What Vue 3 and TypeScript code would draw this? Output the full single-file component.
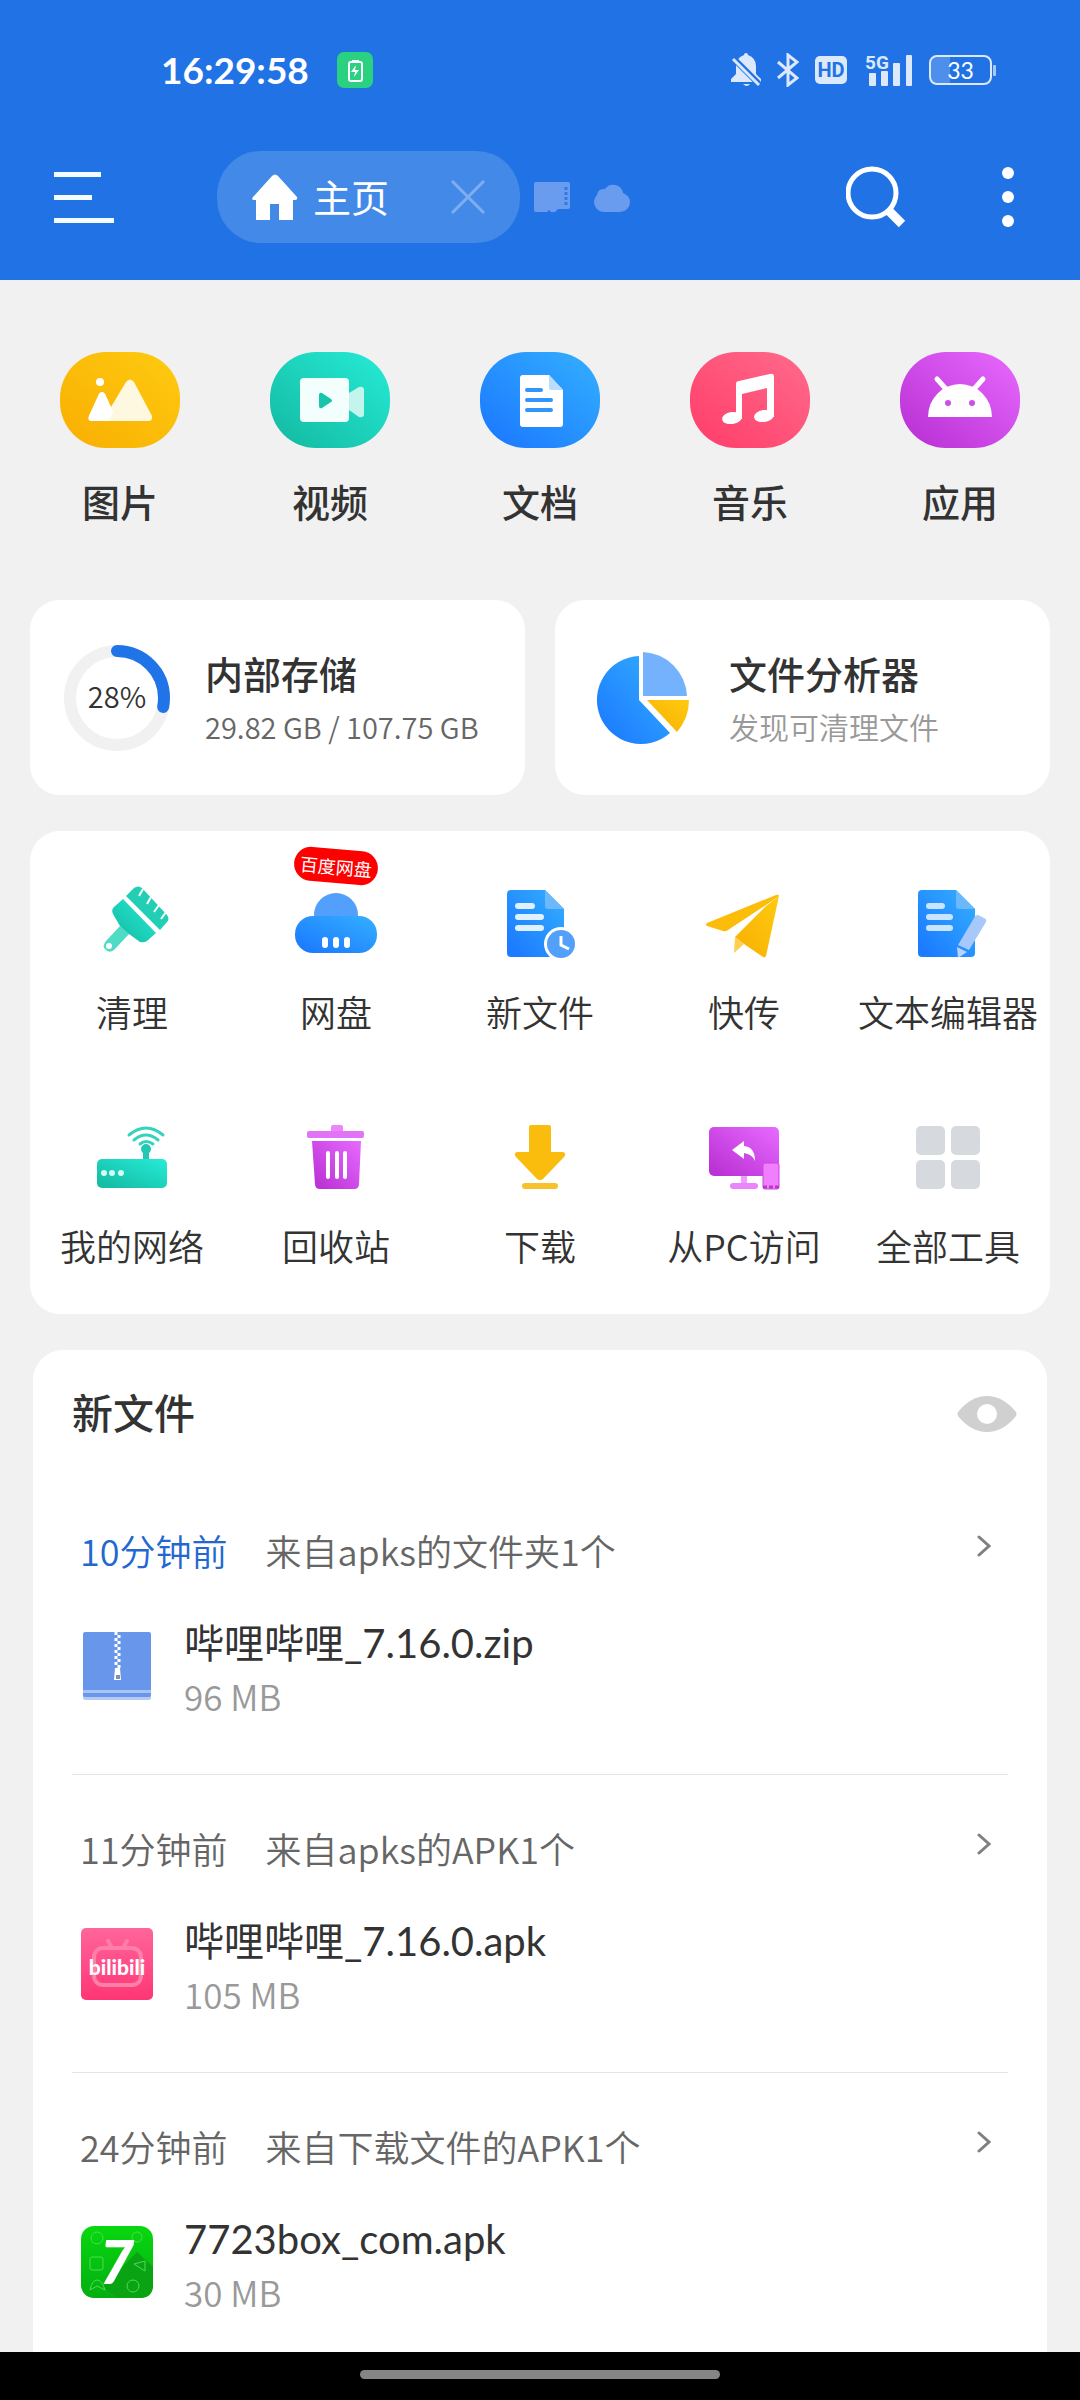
<script setup lang="ts">
interface Entry {
  label: string
  art: string
  badge?: string
}

interface FileGroup {
  time: string
  source: string
  name: string
  size: string
  art: string
  fresh?: boolean
}

const categories: Entry[] = [
  {
    label: '图片',
    art: `<rect width="120" height="96" rx="46" fill="url(#g-yellow)"/>
      <circle cx="40" cy="30" r="4" fill="#fff"/>
      <path d="M29 64 39 42q3-4 6 0l6 13 15-25q4-5 8 0l18 34q1 5-4 5H32q-5 0-3-5z" fill="#fff8e0"/>
      <path d="M29 64 39 42q3-4 6 0l8 18-4 9H32q-5 0-3-5z" fill="#fff"/>`,
  },
  {
    label: '视频',
    art: `<rect width="120" height="96" rx="46" fill="url(#g-green)"/>
      <path d="M79 41l10-6q5-1 5 3v24q0 4-5 3l-10-7z" fill="#c3f5ec"/>
      <rect x="30" y="26" width="49" height="44" rx="4" fill="#f2fffd"/>
      <path d="M49 43q0-3 3-2l9 6q2 2 0 3l-9 6q-3 1-3-2z" fill="#19c4ad"/>`,
  },
  {
    label: '文档',
    art: `<rect width="120" height="96" rx="46" fill="url(#g-blue)"/>
      <path d="M43 23h26l14 15v34q0 3-3 3H43q-3 0-3-3V26q0-3 3-3z" fill="#fff"/>
      <path d="M69 23l14 15H71q-2 0-2-2z" fill="#bcdcff"/>
      <path d="M47 38h14M47 48h24M47 58h24" stroke="#3296f8" stroke-width="4" stroke-linecap="round"/>`,
  },
  {
    label: '音乐',
    art: `<rect width="120" height="96" rx="46" fill="url(#g-red)"/>
      <path d="M46 32q0-3 3-3l31-7q4-1 4 3v40h-7V36l-25 6v25h-6z" fill="#fff"/>
      <ellipse cx="42" cy="66" rx="10" ry="6" transform="rotate(-8 42 66)" fill="#fff"/>
      <ellipse cx="74" cy="64" rx="10" ry="6" transform="rotate(-8 74 64)" fill="#fff"/>`,
  },
  {
    label: '应用',
    art: `<rect width="120" height="96" rx="46" fill="url(#g-purple)"/>
      <path d="M28 65a32 33 0 0 1 64 0z" fill="#fff"/>
      <path d="M37 27l9 10M83 27l-9 10" stroke="#fff" stroke-width="5" stroke-linecap="round"/>
      <circle cx="48" cy="51" r="3" fill="#cd4fe6"/><circle cx="72" cy="51" r="3" fill="#cd4fe6"/>`,
  },
]

const tools: Entry[] = [
  {
    label: '清理',
    art: `<path d="M36 51 22 66q-4 5-1 8 4 5 9 1l16-17z" fill="#4fdcc4"/>
      <path d="M39 24 72 58l-9 8q-3 2-7 1l-11-8-9-8-7-12q-2-4 1-7z" fill="url(#g-green)"/>
      <path d="M42 21l8-8q4-3 8 0l25 27q3 4 0 7l-7 8z" fill="#22cfb4"/>
      <path d="M59 14l-4 7M67 22l-4 7M75 30l-5 7M82 37l-5 7" stroke="#fff" stroke-width="2"/>
      <circle cx="25" cy="71" r="3" fill="#fff"/>`,
  },
  {
    label: '网盘',
    badge: '百度网盘',
    art: `<circle cx="48" cy="40" r="22" fill="#52a0fc"/>
      <rect x="7" y="41" width="82" height="37" rx="18" fill="url(#g-blue)"/>
      <path d="M37 65v5M48 65v5M59 65v5" stroke="#fff" stroke-width="6" stroke-linecap="round"/>`,
  },
  {
    label: '新文件',
    art: `<path d="M19 15h34l19 19v44q0 4-4 4H19q-4 0-4-4V19q0-4 4-4z" fill="url(#g-blue)"/>
      <path d="M53 15l19 19H56q-3 0-3-3z" fill="#6cb8fd"/>
      <path d="M26 31h14M26 42h23M26 53h23" stroke="#dff0ff" stroke-width="6" stroke-linecap="round"/>
      <circle cx="69" cy="69" r="17" fill="#fff"/><circle cx="69" cy="69" r="14" fill="#52a0f9"/>
      <path d="M69 61v9l8 4" fill="none" stroke="#fff" stroke-width="3"/>`,
  },
  {
    label: '快传',
    art: `<path d="M11 48 80 20q3-1 3 1l-13 9-38 25q-2 2-5 1l-16-5q-2-1 0-3z" fill="#fcbd0a"/>
      <path d="M83 21 70 81q-1 2-3 1L48 69l-9-7 31-31z" fill="url(#g-yellow)"/>
      <path d="M39 62l9 7-10 9z" fill="#fdd051"/>`,
  },
  {
    label: '文本编辑器',
    art: `<path d="M22 15h34l19 19v44q0 4-4 4H22q-4 0-4-4V19q0-4 4-4z" fill="url(#g-blue)"/>
      <path d="M56 15l19 19H59q-3 0-3-3z" fill="#6cb8fd"/>
      <path d="M29 31h13M29 42h21M29 53h21" stroke="#c9e4ff" stroke-width="6" stroke-linecap="round"/>
      <path d="M74 43q1-3 4-3l6 3q3 1 2 4L69 75l-11-5z" fill="#a6c8fb"/>
      <path d="M57 72l10 5-9 6z" fill="#b8d4fc"/>`,
  },
  {
    label: '我的网络',
    art: `<path d="M62 41v12" stroke="#22c8b2" stroke-width="6"/>
      <rect x="13" y="50" width="70" height="29" rx="5" fill="url(#g-green)"/>
      <circle cx="62" cy="40" r="5" fill="#22c8b2"/>
      <g fill="#d4fbf4"><circle cx="20" cy="64" r="3"/><circle cx="28" cy="64" r="3"/><circle cx="37" cy="64" r="3"/></g>
      <g fill="none" stroke="#35d3bf" stroke-width="3" stroke-linecap="round">
      <path d="M45 26q17-14 34 0M50 31q12-10 24 0M56 35q6-5 13 0"/></g>`,
  },
  {
    label: '回收站',
    art: `<path d="M43 23v-5q0-2 2-2h8q2 0 2 2v5z" fill="#ea85fb"/>
      <rect x="19" y="22" width="57" height="7" rx="2" fill="#e272f6"/>
      <path d="M24 32h49l-2 43q0 5-5 5H32q-5 0-5-5z" fill="url(#g-purple)"/>
      <path d="M40 44v24M49 44v24M57 44v24" stroke="#fff" stroke-width="4" stroke-linecap="round"/>`,
  },
  {
    label: '下载',
    art: `<path d="M39 16h18q2 0 2 2v25h12q4 1 1 5L51 70q-3 2-6 0L24 48q-3-4 1-5h12V18q0-2 2-2z" fill="#fbbd0d"/>
      <rect x="30" y="74" width="36" height="6" rx="3" fill="#f7c22a"/>`,
  },
  {
    label: '从PC访问',
    art: `<rect x="45" y="66" width="6" height="10" fill="#f09cff"/>
      <rect x="34" y="74" width="28" height="6" rx="3" fill="#ea85fb"/>
      <rect x="13" y="18" width="70" height="49" rx="5" fill="url(#g-purple)"/>
      <path d="M36 41l12-9v5q11 1 11 15-3-7-11-8v6z" fill="#fff"/>
      <rect x="67" y="54" width="16" height="26" rx="2" fill="#f07eff" stroke="#cc45e0"/>
      <path d="M67 78h16" stroke="#b53ac8" stroke-width="3" stroke-dasharray="4 2"/>`,
  },
  {
    label: '全部工具',
    art: `<g fill="#d6dade"><rect x="16" y="17" width="29" height="29" rx="5"/><rect x="51" y="17" width="29" height="29" rx="5"/>
      <rect x="16" y="51" width="29" height="29" rx="5"/><rect x="51" y="51" width="29" height="29" rx="5"/></g>`,
  },
]

const groups: FileGroup[] = [
  {
    time: '10分钟前',
    source: '来自apks的文件夹1个',
    name: '哔哩哔哩_7.16.0.zip',
    size: '96 MB',
    fresh: true,
    art: `<rect x="2" y="40" width="68" height="30" rx="2" fill="#b4cbf5"/>
      <rect x="2" y="2" width="68" height="65" rx="2" fill="#6796ea"/>
      <rect x="2" y="60" width="68" height="3" fill="#a9c4f4"/>
      <path d="M35 2v36" stroke="#fff" stroke-width="3" stroke-dasharray="3 3"/>
      <path d="M38 5v36" stroke="#fff" stroke-width="3" stroke-dasharray="3 3"/>
      <path d="M34 38h5l1 12h-7z" fill="#fff"/><rect x="35" y="45" width="4" height="4" fill="#7d8fb5"/>`,
  },
  {
    time: '11分钟前',
    source: '来自apks的APK1个',
    name: '哔哩哔哩_7.16.0.apk',
    size: '105 MB',
    art: `<rect width="72" height="72" rx="5" fill="url(#g-pink)"/>
      <g fill="none" stroke="#ff7fa9" stroke-width="4" stroke-linecap="round"><rect x="13" y="20" width="47" height="37" rx="9"/>
      <path d="M27 13l3 5M46 13l-3 5"/></g>
      <text x="36" y="47" text-anchor="middle" font-family="Lato, sans-serif" font-weight="900" font-size="21" fill="#fff">bilibili</text>`,
  },
  {
    time: '24分钟前',
    source: '来自下载文件的APK1个',
    name: '7723box_com.apk',
    size: '30 MB',
    art: `<rect width="72" height="72" rx="13" fill="url(#g-lime)"/>
      <path d="M56 26 72 41v18q0 13-13 13H37L22 61z" fill="#0aa314"/>
      <g fill="none" stroke="#4ddc52" stroke-width="1"><circle cx="16" cy="12" r="6"/><circle cx="56" cy="11" r="5"/>
      <rect x="9" y="31" width="13" height="13" rx="2"/><path d="M53 38l11-3v10zM9 64q2-10 7-10t8 10l-8-4z"/><circle cx="52" cy="60" r="6"/></g>
      <text x="36" y="58" text-anchor="middle" font-family="Lato, sans-serif" font-weight="900" font-style="italic" font-size="60" fill="#fff">7</text>`,
  },
]

const used = 28
const ringLength = 2 * Math.PI * 47
</script>

<template>
  <div class="app">
    <svg class="defs" aria-hidden="true">
      <defs>
        <linearGradient id="g-yellow" x1="0" y1="1" x2="1" y2="0"><stop offset="0" stop-color="#f9ae02" /><stop offset="1" stop-color="#fecb10" /></linearGradient>
        <linearGradient id="g-green" x1="0" y1="1" x2="1" y2="0"><stop offset="0.1" stop-color="#15bda5" /><stop offset="1" stop-color="#26ecd7" /></linearGradient>
        <linearGradient id="g-blue" x1="0" y1="1" x2="1" y2="0"><stop offset="0.1" stop-color="#1c7bff" /><stop offset="1" stop-color="#34b0ff" /></linearGradient>
        <linearGradient id="g-red" x1="0" y1="1" x2="1" y2="0"><stop offset="0" stop-color="#ff3c69" /><stop offset="1" stop-color="#ff6b8c" /></linearGradient>
        <linearGradient id="g-purple" x1="0" y1="1" x2="1" y2="0"><stop offset="0.1" stop-color="#bb33d6" /><stop offset="1" stop-color="#e86aff" /></linearGradient>
        <linearGradient id="g-pink" x1="0" y1="0" x2="0" y2="1"><stop offset="0" stop-color="#ff659b" /><stop offset="1" stop-color="#ff3676" /></linearGradient>
        <linearGradient id="g-lime" x1="0" y1="0" x2="0" y2="1"><stop offset="0" stop-color="#08d80f" /><stop offset="1" stop-color="#04ae12" /></linearGradient>
      </defs>
    </svg>

    <header class="top">
      <div class="status">
        <time class="clock">16:29:58</time>
        <svg class="charge" width="36" height="36" viewBox="0 0 36 36">
          <rect width="36" height="36" rx="7" fill="#2ad181" />
          <rect x="12" y="10" width="13" height="19" rx="2" fill="none" stroke="#fff" stroke-width="2" />
          <path d="M15 8h7v2h-7zM19 13l-5 7h4l-1 5 5-7h-4z" fill="#fff" />
        </svg>
        <div class="indicators">
          <svg width="30" height="34" viewBox="0 0 30 34" fill="#dce8fb">
            <path d="M15 0q2 0 2 2 8 3 8 11v8l5 5v3H0v-3l5-5v-8Q5 5 13 2q0-2 2-2zM12 31h7q-3 4-7 0z" />
            <path d="M-1 2 31 34" stroke="#2173e5" stroke-width="6" />
            <path d="M2 6l26 26" stroke="#dce8fb" stroke-width="3" />
          </svg>
          <svg width="22" height="34" viewBox="0 0 22 34" fill="none" stroke="#dce8fb" stroke-width="3">
            <path d="M1 9l19 16-9 7V2l9 7L1 25" />
          </svg>
          <span class="hd">HD</span>
          <svg width="50" height="44" viewBox="-2 -5 50 44" fill="#dce8fb">
            <rect x="4" y="20" width="7" height="13" rx="1" /><rect x="16" y="18" width="7" height="15" rx="1" />
            <rect x="28" y="10" width="7" height="23" rx="1" /><rect x="41" y="2" width="6" height="31" rx="1" />
            <text x="0" y="16" font-family="Roboto, sans-serif" font-weight="700" font-size="19">5G</text>
          </svg>
          <span class="battery">33</span>
        </div>
      </div>

      <nav class="toolbar">
        <button class="icon-btn" aria-label="菜单">
          <svg width="60" height="52" viewBox="0 0 60 52" fill="#f2fbff">
            <rect y="1" width="47" height="5" /><rect y="24" width="38" height="5" /><rect y="47" width="60" height="5" />
          </svg>
        </button>
        <div class="tab">
          <button class="tab-home">
            <svg width="46" height="46" viewBox="0 0 46 46" fill="#fff">
              <path d="M20 2q3-3 6 0l19 21q1 3-2 3h-2v20H27V30h-9v16H4V26H2q-3 0-1-3z" />
            </svg>
            主页
          </button>
          <button class="icon-btn" aria-label="关闭">
            <svg width="34" height="34" viewBox="0 0 34 34" stroke="#7fadf0" stroke-width="3"><path d="M1 1l32 32M33 1 1 33" /></svg>
          </button>
        </div>
        <div class="windows">
          <button class="icon-btn" aria-label="内部存储">
            <svg width="36" height="30" viewBox="0 0 36 30">
              <path d="M2 0h32q2 0 2 2v23q0 2-2 2H24l-3 3h-4l-2-2-2 2H2q-2 0-2-2V2q0-2 2-2z" fill="#699cef" />
              <path d="M32 5v18" stroke="#2f79e6" stroke-width="3" stroke-dasharray="3 2" />
            </svg>
          </button>
          <button class="icon-btn" aria-label="网盘">
            <svg width="36" height="30" viewBox="0 0 36 30" fill="#699cef">
              <path d="M10 30a10 10 0 0 1-7-17q1-7 8-6a10 10 0 0 1 18 4q7 3 7 9a10 10 0 0 1-10 10z" />
            </svg>
          </button>
        </div>
        <button class="icon-btn search" aria-label="搜索">
          <svg width="60" height="62" viewBox="0 0 60 62">
            <circle cx="26" cy="27" r="24" fill="none" stroke="#fff" stroke-width="5" />
            <path d="M43 45l13 13" stroke="#fff" stroke-width="9" />
          </svg>
        </button>
        <button class="icon-btn" aria-label="更多">
          <svg width="14" height="62" viewBox="0 0 14 62" fill="#fff">
            <circle cx="7" cy="7" r="6" /><circle cx="7" cy="31" r="6" /><circle cx="7" cy="55" r="6" />
          </svg>
        </button>
      </nav>
    </header>

    <main class="main">
      <section class="categories">
        <button v-for="c in categories" :key="c.label" class="category">
          <svg width="120" height="96" viewBox="0 0 120 96" v-html="c.art"></svg>
          <span>{{ c.label }}</span>
        </button>
      </section>

      <section class="cards">
        <button class="card storage">
          <svg width="106" height="106" viewBox="0 0 106 106">
            <g fill="none" stroke-width="12">
              <circle cx="53" cy="53" r="47" stroke="#f1f1f1" />
              <circle
                cx="53" cy="53" r="47" stroke="#2174e8" stroke-linecap="round" transform="rotate(-90 53 53)"
                :stroke-dasharray="`${(ringLength * used) / 100} ${ringLength}`"
              />
            </g>
            <text class="ring-text" x="53" y="63" text-anchor="middle">{{ used }}%</text>
          </svg>
          <span class="card-text">
            <strong>内部存储</strong>
            <span class="usage">29.82 GB / 107.75 GB</span>
          </span>
        </button>
        <button class="card analyzer">
          <svg width="96" height="96" viewBox="0 0 96 96">
            <path d="M45 6v44l31 33A44 44 0 1 1 45 6z" fill="url(#g-blue)" />
            <path d="M49 2a46 46 0 0 1 44 44H49z" fill="#74b2fd" />
            <path d="M53 50h42q0 18-12 32z" fill="url(#g-yellow)" />
          </svg>
          <span class="card-text">
            <strong>文件分析器</strong>
            <span class="hint">发现可清理文件</span>
          </span>
        </button>
      </section>

      <section class="tools">
        <button v-for="t in tools" :key="t.label" class="tool">
          <svg width="96" height="96" viewBox="0 0 96 96" v-html="t.art"></svg>
          <span>{{ t.label }}</span>
          <span v-if="t.badge" class="badge">{{ t.badge }}</span>
        </button>
      </section>

      <section class="recent">
        <div class="recent-head">
          <h2>新文件</h2>
          <button class="icon-btn" aria-label="显示">
            <svg width="60" height="36" viewBox="0 0 60 36">
              <path d="M1 16Q14 0 30 0t29 16q1 2 0 4Q46 36 30 36T1 20q-1-2 0-4z" fill="#d0d0d0" />
              <circle cx="30" cy="18" r="10" fill="#fff" />
            </svg>
          </button>
        </div>
        <article v-for="g in groups" :key="g.name" class="group">
          <a href="#" class="group-head">
            <span :class="{ fresh: g.fresh }">{{ g.time }}</span>
            <span>{{ g.source }}</span>
            <svg width="14" height="40" viewBox="0 0 14 40" fill="none" stroke="#808080" stroke-width="3" stroke-linecap="round">
              <path d="M2 11l10 9-10 9" />
            </svg>
          </a>
          <a href="#" class="file">
            <svg width="72" height="72" viewBox="0 0 72 72" v-html="g.art"></svg>
            <span class="file-text">
              <span class="file-name">{{ g.name }}</span>
              <span class="file-size">{{ g.size }}</span>
            </span>
          </a>
        </article>
      </section>
    </main>

    <footer class="gesture"><span></span></footer>
  </div>
</template>

<style>
body {
  margin: 0;
  background: #f1f1f1;
}
</style>

<style scoped>
.app {
  display: flex;
  flex-direction: column;
  min-height: 100vh;
  background: #f1f1f1;
  color: #333;
  font-family: Lato, 'Noto Sans CJK SC', sans-serif;
}
.app * {
  box-sizing: border-box;
}
.defs {
  position: absolute;
  width: 0;
  height: 0;
}
svg {
  display: block;
  flex: none;
}
button {
  margin: 0;
  padding: 0;
  border: 0;
  background: none;
  color: inherit;
  font: inherit;
  text-align: left;
}
a {
  color: inherit;
  text-decoration: none;
}

.top {
  padding-bottom: 37px;
  background: #2173e5;
  color: #fff;
}
.status {
  display: flex;
  align-items: center;
  height: 94px;
  margin-bottom: 57px;
  padding: 46px 84px 0 161px;
}
.clock {
  font-size: 37px;
  line-height: 48px;
  font-weight: 700;
}
.charge {
  margin-left: 28px;
}
.indicators {
  display: flex;
  align-items: center;
  gap: 16px;
  margin-left: auto;
}
.hd {
  width: 32px;
  border-radius: 5px;
  background: #dce8fb;
  color: #2173e5;
  font: 700 20px/28px Roboto, sans-serif;
  text-align: center;
}
.battery {
  position: relative;
  width: 63px;
  margin-right: 4px;
  border: 2px solid #dce8fb;
  border-radius: 8px;
  background: linear-gradient(90deg, #4d8fea 33%, transparent 33%);
  font-size: 23px;
  line-height: 26px;
  text-align: center;
}
.battery::after {
  position: absolute;
  top: 8px;
  right: -6px;
  width: 3px;
  height: 11px;
  border-radius: 1px;
  background: #a9c8f5;
  content: '';
}
.toolbar {
  display: flex;
  align-items: center;
  padding: 0 65px 0 54px;
}
.tab {
  display: flex;
  align-items: center;
  justify-content: space-between;
  width: 303px;
  height: 92px;
  margin: 0 14px 0 103px;
  padding: 0 35px;
  border-radius: 44px;
  background: #4289e8;
}
.tab-home {
  display: flex;
  align-items: center;
  gap: 15px;
  font-size: 38px;
  line-height: 48px;
}
.windows {
  display: flex;
  gap: 24px;
}
.search {
  margin: 0 95px 0 auto;
}

.main {
  flex: 1;
}
.categories {
  display: grid;
  grid-template-columns: repeat(5, minmax(0, 1fr));
  padding: 72px 15px 74px;
}
.category {
  display: flex;
  flex-direction: column;
  align-items: center;
  gap: 30px;
  font-size: 38px;
  font-weight: 500;
  line-height: 48px;
}
.cards {
  display: grid;
  grid-template-columns: repeat(2, minmax(0, 1fr));
  gap: 30px;
  margin: 0 30px 36px;
}
.card {
  display: flex;
  align-items: center;
  gap: 35px;
  height: 195px;
  padding: 0 34px;
  border-radius: 30px;
  background: #fff;
}
.analyzer {
  gap: 39px;
  padding: 0 39px;
}
.ring-text {
  fill: #333;
  font-family: 'Noto Sans CJK SC', sans-serif;
  font-size: 29px;
  font-weight: 350;
}
.card-text {
  display: flex;
  flex-direction: column;
  padding-top: 2px;
  white-space: nowrap;
}
.card-text strong {
  font-size: 38px;
  font-weight: 500;
  line-height: 54px;
}
.usage,
.hint {
  font-family: 'Noto Sans CJK SC', sans-serif;
  font-weight: 350;
  line-height: 50px;
}
.usage {
  color: #666;
  font-size: 29px;
}
.hint {
  color: #999;
  font-size: 30px;
}

.tools {
  display: grid;
  grid-template-columns: repeat(5, minmax(0, 1fr));
  row-gap: 74px;
  margin: 0 30px 36px;
  padding: 44px 0 45px;
  border-radius: 30px;
  background: #fff;
}
.tool {
  position: relative;
  display: flex;
  flex-direction: column;
  align-items: center;
  gap: 16px;
  font-family: 'Noto Sans CJK SC', sans-serif;
  font-size: 36px;
  font-weight: 350;
  line-height: 48px;
  white-space: nowrap;
}
.badge {
  position: absolute;
  top: -26px;
  left: 50%;
  width: 84px;
  border-radius: 17px;
  background: #f00;
  color: #fff;
  font-size: 18px;
  font-weight: 400;
  line-height: 34px;
  text-align: center;
  transform: translateX(-50%) rotate(5deg);
}

.recent {
  margin: 0 33px;
  padding: 0 39px;
  border-radius: 30px 30px 0 0;
  background: #fff;
}
.recent-head {
  display: flex;
  align-items: center;
  justify-content: space-between;
  margin-right: -9px;
  padding: 34px 0 33px;
}
.recent-head h2 {
  margin: 0;
  font-size: 41px;
  font-weight: 500;
  line-height: 60px;
}
.group {
  padding: 49px 0 52px;
  border-bottom: 1px solid #e4e4e4;
}
.group:last-child {
  padding-bottom: 34px;
  border-bottom: 0;
}
.group-head {
  display: flex;
  align-items: flex-start;
  gap: 38px;
  margin-bottom: 42px;
  padding: 0 17px 0 8px;
  color: #666;
  font-family: 'Noto Sans CJK SC', sans-serif;
  font-size: 36px;
  font-weight: 350;
  line-height: 48px;
}
.group-head svg {
  margin-left: auto;
}
.fresh {
  color: #2268d0;
}
.file {
  display: flex;
  align-items: flex-start;
  gap: 31px;
  padding-left: 9px;
}
.file svg {
  margin-top: 14px;
}
.file-text {
  display: flex;
  flex-direction: column;
}
.file-name {
  font-size: 40px;
  line-height: 54px;
}
.file-size {
  color: #999;
  font-family: 'Noto Sans CJK SC', sans-serif;
  font-size: 35px;
  font-weight: 350;
  line-height: 52px;
}

.gesture {
  display: flex;
  justify-content: center;
  height: 48px;
  padding-top: 18px;
  background: #000;
}
.gesture span {
  width: 33.33%;
  height: 9px;
  border-radius: 5px;
  background: #858585;
}
</style>
